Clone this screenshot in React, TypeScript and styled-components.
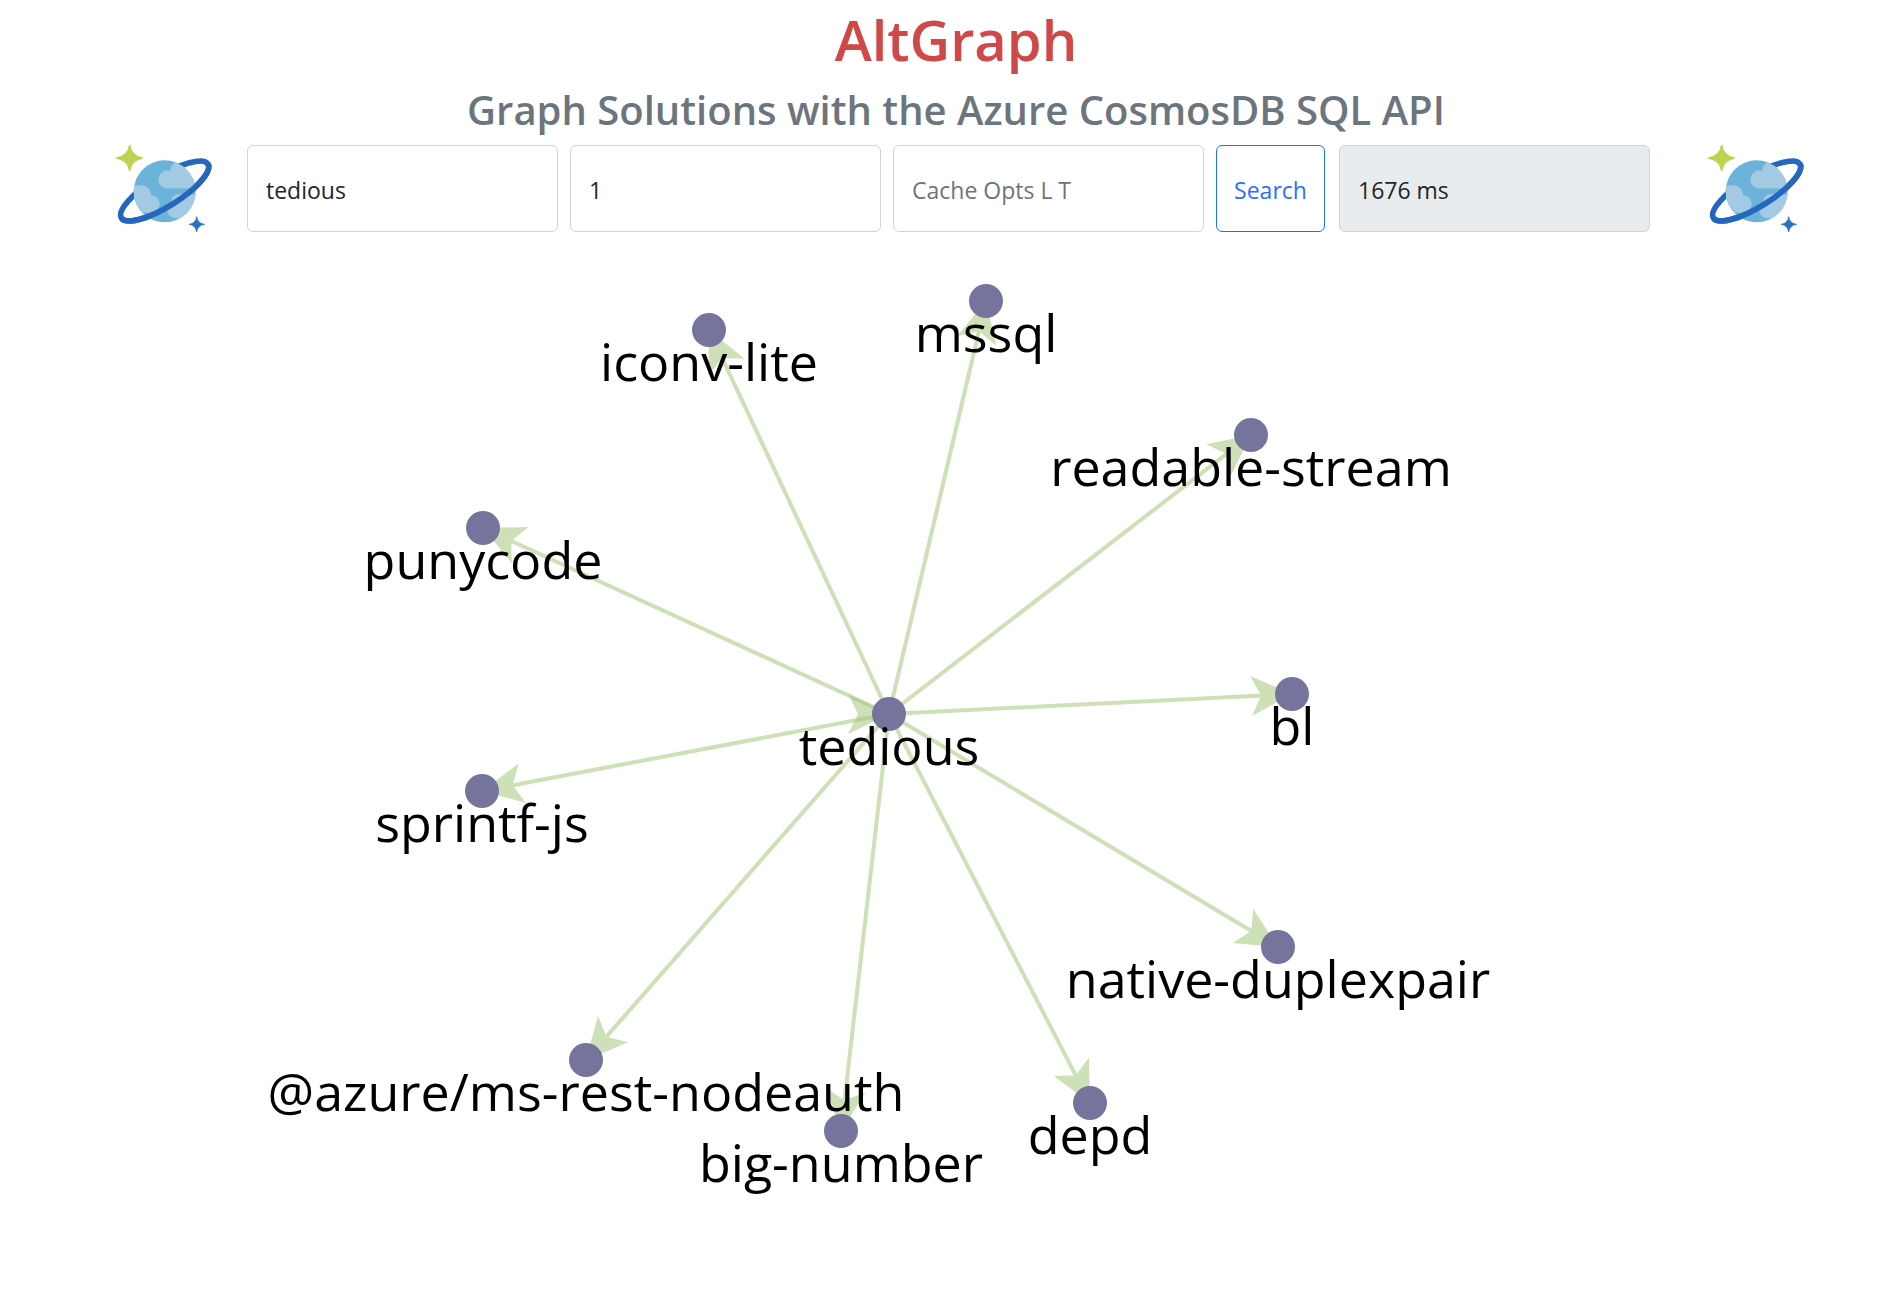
import React from "react";
import styled, { createGlobalStyle } from "styled-components";

const GlobalStyle = createGlobalStyle`
  *, *::before, *::after { box-sizing: border-box; }
  body {
    margin: 0;
    background: #fff;
    color: #212529;
    font-family: "Open Sans", "Noto Sans", sans-serif;
  }
`;

const Header = styled.header`
  padding: 3px 0 0 24px;
  text-align: center;
`;

const Title = styled.h1`
  margin: 0 0 10px;
  font-size: 56px;
  line-height: 72px;
  font-weight: 600;
  color: #d14848;
`;

const Subtitle = styled.h3`
  margin: 0;
  font-size: 40px;
  line-height: 50px;
  font-weight: 600;
  color: #6c757d;
`;

const Toolbar = styled.div`
  display: grid;
  grid-template-columns: 96px minmax(0, 1fr) 96px;
  align-items: center;
  margin-top: 10px;
  padding: 0 84px 0 92px;
`;

const SearchForm = styled.form`
  display: flex;
  gap: 12px;
  margin: 0 58px 0 35px;
`;

const Field = styled.input`
  flex: 1 1 0;
  min-width: 0;
  height: 87px;
  padding: 2px 18px 0;
  border: 1px solid #ced4da;
  border-radius: 6px;
  background: #fff;
  color: #212529;
  font: inherit;
  font-size: 23px;

  &::placeholder { color: #6c757d; opacity: 1; }
  &:read-only { margin-left: 2px; background: #e9ecef; }
`;

const SearchButton = styled.button`
  flex: 0 0 109px;
  height: 87px;
  padding: 2px 0 0;
  border: 1px solid #1f6fff;
  border-radius: 6px;
  background: #fff;
  color: #2a6fff;
  font: inherit;
  font-size: 23px;
  cursor: pointer;
`;

const Logo = styled.svg`
  display: block;
  width: 96px;
  height: 87px;
`;

const Canvas = styled.svg`
  display: block;
  width: 100%;
  height: auto;
`;

const Edge = styled.g`
  opacity: 0.5;
  line { stroke: #9dc272; stroke-width: 4; }
  polygon { fill: #9dc272; }
`;

const NodeDot = styled.circle`
  fill: #75749c;
`;

const NodeLabel = styled.text`
  font-size: 52px;
  text-anchor: middle;
  fill: #000;
`;

function CosmosLogo({ id }: { id: string }) {
  return (
    <Logo viewBox="49 45 288 261" role="img" aria-label="Azure Cosmos DB">
      <defs>
        <clipPath id={id}>
          <circle cx="195" cy="184" r="93" />
        </clipPath>
      </defs>
      <g transform="translate(195 183) rotate(-32)">
        <ellipse rx="153" ry="46" fill="none" stroke="#2467bd" strokeWidth="17" />
      </g>
      <circle cx="195" cy="184" r="93" fill="#6bb3d8" />
      <g clipPath={`url(#${id})`} fill="#a3cae3">
        <circle cx="203" cy="148" r="27" />
        <circle cx="242" cy="124" r="31" />
        <rect x="203" y="126" width="90" height="49" />
        <circle cx="126" cy="194" r="28" />
        <rect x="96" y="166" width="30" height="60" />
        <circle cx="154" cy="222" r="26" />
        <rect x="96" y="200" width="58" height="48" />
        <circle cx="235" cy="212" r="19" />
        <circle cx="228" cy="239" r="26" />
        <rect x="235" y="193" width="60" height="90" />
      </g>
      <g transform="translate(195 183) rotate(-32)">
        <path d="M-153 0A153 46 0 0 0 153 0" fill="none" stroke="#2467bd" strokeWidth="17" />
      </g>
      <path d="M90 45Q95 79 129 84Q95 89 90 123Q85 89 50 84Q85 79 90 45Z" fill="#bdd34f" stroke="#bdd34f" strokeWidth="4" />
      <path d="M291 260Q294 280 315 283Q294 286 291 306Q288 286 268 283Q288 280 291 260Z" fill="#2672c0" stroke="#2672c0" strokeWidth="2" />
    </Logo>
  );
}

type GraphNode = { label: string; x: number; y: number };

const root: GraphNode = { label: "tedious", x: 889, y: 714 };

const dependencies: GraphNode[] = [
  { label: "iconv-lite", x: 709, y: 330 },
  { label: "mssql", x: 986, y: 301 },
  { label: "readable-stream", x: 1251, y: 435 },
  { label: "punycode", x: 483, y: 528 },
  { label: "bl", x: 1292, y: 694 },
  { label: "sprintf-js", x: 482, y: 791 },
  { label: "native-duplexpair", x: 1278, y: 947 },
  { label: "@azure/ms-rest-nodeauth", x: 586, y: 1060 },
  { label: "depd", x: 1090, y: 1103 },
  { label: "big-number", x: 841, y: 1131 },
];

function Arrow({ from, to }: { from: GraphNode; to: GraphNode }) {
  const dx = to.x - from.x;
  const dy = to.y - from.y;
  const length = Math.hypot(dx, dy);
  const angle = (Math.atan2(dy, dx) * 180) / Math.PI;
  return (
    <Edge transform={`translate(${to.x} ${to.y}) rotate(${angle})`}>
      {length > 0 && <line x1={-length} y1="0" x2="-30" y2="0" />}
      <polygon points="0,0 -41,-20 -31,0 -41,20" />
    </Edge>
  );
}

export default function App() {
  return (
    <>
      <GlobalStyle />
      <Header>
        <Title>AltGraph</Title>
        <Subtitle>Graph Solutions with the Azure CosmosDB SQL API</Subtitle>
        <Toolbar>
          <CosmosLogo id="globe-left" />
          <SearchForm onSubmit={(e) => e.preventDefault()}>
            <Field aria-label="Library name" defaultValue="tedious" />
            <Field aria-label="Depth" defaultValue="1" />
            <Field aria-label="Cache options" placeholder="Cache Opts L T" />
            <SearchButton type="submit">Search</SearchButton>
            <Field aria-label="Elapsed time" value="1676 ms" readOnly />
          </SearchForm>
          <CosmosLogo id="globe-right" />
        </Toolbar>
      </Header>
      <main>
        <Canvas viewBox="0 232 1888 1068" role="img" aria-label="Dependency graph">
          {dependencies.map((node) => (
            <Arrow key={node.label} from={root} to={node} />
          ))}
          <Arrow from={root} to={root} />
          {[root, ...dependencies].map((node) => (
            <g key={node.label}>
              <NodeDot cx={node.x} cy={node.y} r="17" />
              <NodeLabel x={node.x} y={node.y + 51}>{node.label}</NodeLabel>
            </g>
          ))}
        </Canvas>
      </main>
    </>
  );
}
